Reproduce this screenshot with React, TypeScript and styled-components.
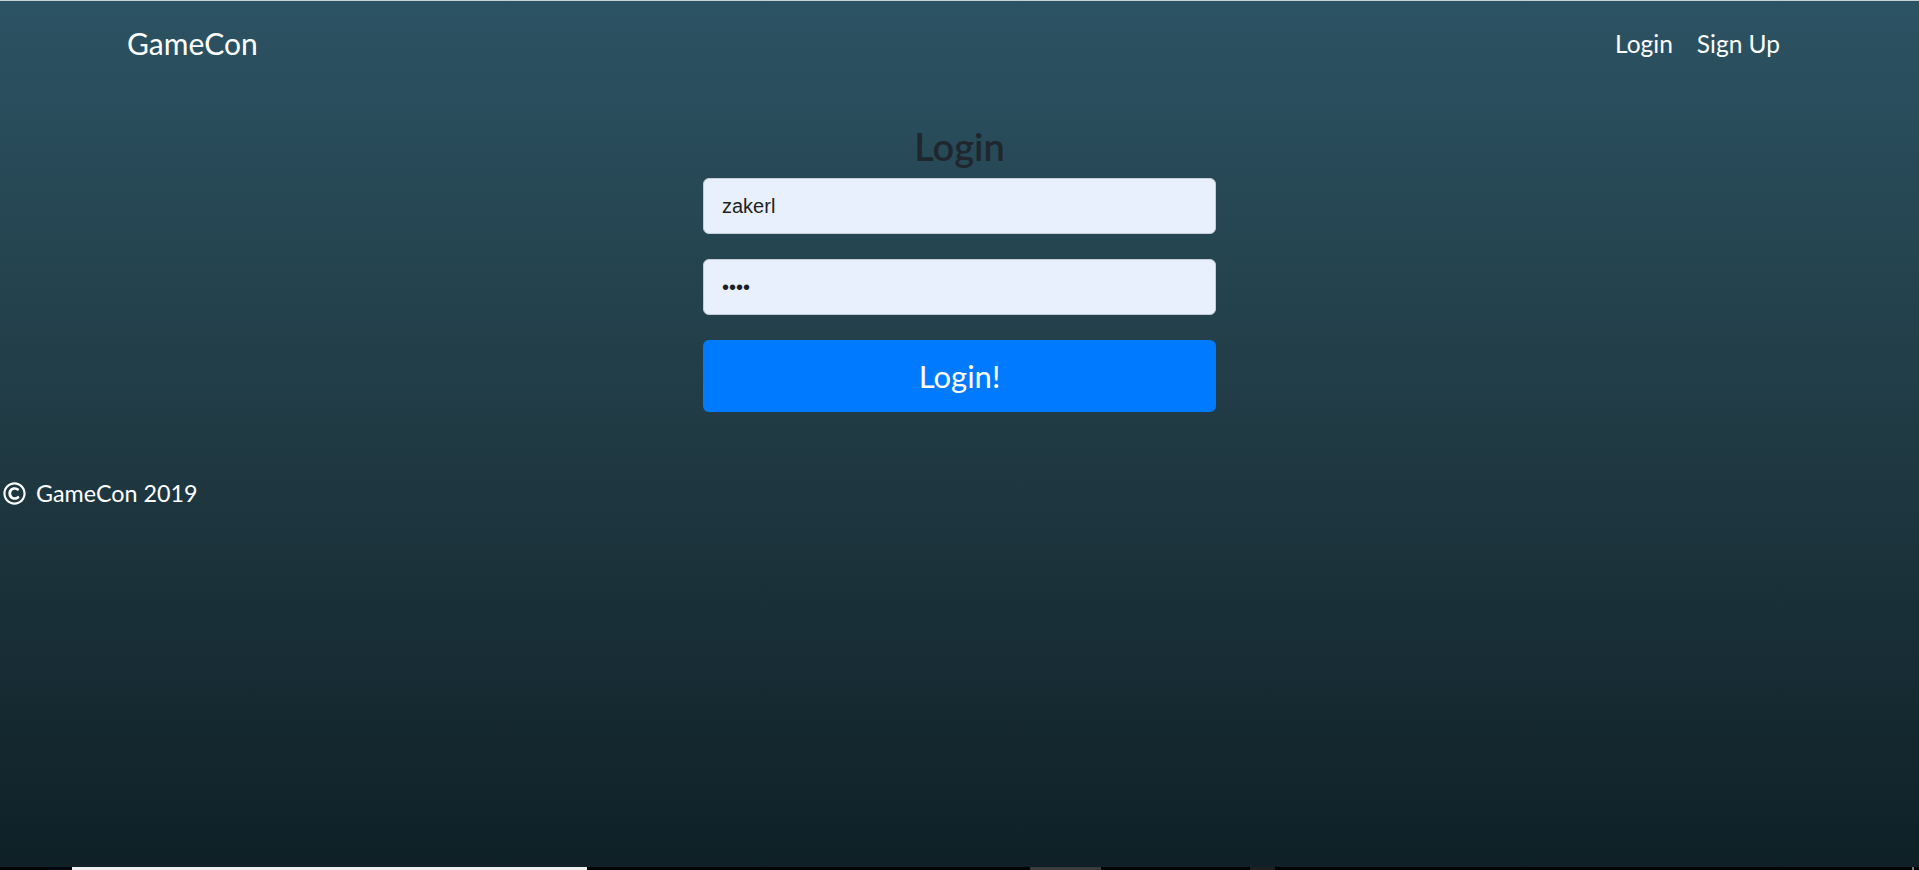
import React from "react";
import styled, { createGlobalStyle } from "styled-components";
import { FaRegCopyright } from "react-icons/fa";

const GlobalStyle = createGlobalStyle`
  html, body {
    margin: 0;
    padding: 0;
    height: 870px;
    overflow: hidden;
    background: #000;
  }
  * { box-sizing: border-box; }
  #root { height: 870px; }
`;

const Screen = styled.div`
  display: flex;
  flex-direction: column;
  height: 870px;
`;

const Page = styled.div`
  flex: 0 0 867px;
  display: flex;
  flex-direction: column;
  border-top: 1px solid #cdd0d2;
  background: linear-gradient(to bottom, #2c5364 0%, #203a43 50%, #0f2027 100%);
  font-family: Lato, "Open Sans", sans-serif;
  color: #fff;
`;

const Nav = styled.nav`
  height: 85px;
  display: flex;
  align-items: center;
  justify-content: space-between;
  padding: 0 127px 0 127px;
`;

const Brand = styled.a`
  font-size: 30px;
  line-height: 45px;
  color: #fff;
  text-decoration: none;
`;

const NavLinks = styled.div`
  display: flex;
  align-items: center;
`;

const NavLink = styled.a`
  font-size: 24.5px;
  line-height: 36px;
  padding: 0 12px;
  color: #fff;
  text-decoration: none;
`;

const Main = styled.main`
  display: flex;
  justify-content: center;
  padding-top: 39px;
`;

const Form = styled.form`
  width: 513px;
  display: flex;
  flex-direction: column;
`;

const Title = styled.h2`
  margin: 0 0 10px;
  text-align: center;
  font-size: 38px;
  line-height: 43px;
  font-weight: 600;
  color: #1f272d;
`;

const Input = styled.input`
  height: 56px;
  width: 100%;
  margin: 0 0 25px;
  padding: 0 18px;
  border: 1px solid #c4ccd5;
  border-radius: 6px;
  background: #e8f0fe;
  color: #1d1f22;
  font-family: "Liberation Sans", Arial, sans-serif;
  font-size: 20px;
  outline: none;
`;

const SubmitButton = styled.button`
  height: 72px;
  width: 100%;
  border: none;
  border-radius: 6px;
  background: #007bff;
  color: #fff;
  font-family: Lato, "Open Sans", sans-serif;
  font-size: 31px;
  line-height: 45px;
  cursor: pointer;
`;

const Footer = styled.footer`
  margin-top: 63px;
  padding-left: 3px;
  display: flex;
  align-items: center;
  gap: 10px;
  font-size: 23.3px;
  line-height: 36px;
  color: #fff;
`;

const Taskbar = styled.div`
  flex: 0 0 3px;
  display: flex;
  background: #000;
`;

const TaskSeg = styled.div<{ $w: number; $c: string }>`
  flex: 0 0 ${(p) => p.$w}px;
  background: ${(p) => p.$c};
`;

export default function App() {
  return (
    <>
      <GlobalStyle />
      <Screen>
        <Page>
          <Nav>
            <Brand href="#">GameCon</Brand>
            <NavLinks>
              <NavLink href="#">Login</NavLink>
              <NavLink href="#">Sign Up</NavLink>
            </NavLinks>
          </Nav>
          <Main>
            <Form onSubmit={(e) => e.preventDefault()}>
              <Title>Login</Title>
              <Input type="text" defaultValue="zakerl" />
              <Input type="password" defaultValue="1234" />
              <SubmitButton type="submit">Login!</SubmitButton>
            </Form>
          </Main>
          <Footer>
            <FaRegCopyright size={23} />
            <span>GameCon 2019</span>
          </Footer>
        </Page>
        <Taskbar>
          <TaskSeg $w={48} $c="#000" />
          <TaskSeg $w={24} $c="#05060f" />
          <TaskSeg $w={515} $c="#efefef" />
          <TaskSeg $w={443} $c="#000" />
          <TaskSeg $w={71} $c="#3b3b3b" />
          <TaskSeg $w={149} $c="#000" />
          <TaskSeg $w={25} $c="#1f1f1f" />
          <TaskSeg $w={637} $c="#000" />
          <TaskSeg $w={2} $c="#777" />
        </Taskbar>
      </Screen>
    </>
  );
}
